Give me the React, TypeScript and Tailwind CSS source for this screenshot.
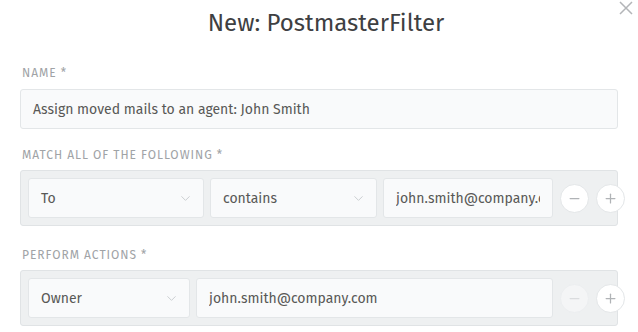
import { ChevronDown, Minus, Plus } from 'lucide-react'

function Select({ label, width }: { label: string; width: string }) {
  return (
    <div className={`${width} h-10 shrink-0 flex items-center justify-between pl-3 pr-[10px] bg-[#f9fafb] border border-[#e3e6e8] rounded-[3px]`}>
      <span className="text-[14px] text-[#585856]">{label}</span>
      <ChevronDown className="w-[15px] h-[15px] text-[#c8cbce]" strokeWidth={1.5} />
    </div>
  )
}

function Field({ value, width }: { value: string; width: string }) {
  return (
    <div className={`${width} h-10 shrink-0 flex items-center px-3 bg-[#f9fafb] border border-[#e3e6e8] rounded-[3px]`}>
      <div className="flex-1 overflow-hidden">
        <span className="text-[14px] text-[#585856] whitespace-nowrap">{value}</span>
      </div>
    </div>
  )
}

function RoundButton({ kind, disabled }: { kind: 'minus' | 'plus'; disabled?: boolean }) {
  const Icon = kind === 'minus' ? Minus : Plus
  return (
    <div
      className={`w-[29px] h-[29px] rounded-full flex items-center justify-center border ${
        disabled ? 'bg-[#f4f5f6] border-[#eceef0]' : 'bg-white border-[#e3e6e8]'
      }`}
    >
      <Icon className={`w-[15px] h-[15px] ${disabled ? 'text-[#dadcde]' : 'text-[#b0b3b6]'}`} strokeWidth={2} />
    </div>
  )
}

function Label({ children }: { children: string }) {
  return (
    <div className="text-[12px] tracking-[0.08em] uppercase text-[#a0a3a6] leading-none px-[2px]">{children}</div>
  )
}

export default function App() {
  return (
    <div className="w-[638px] h-[332px] bg-white overflow-hidden relative" style={{ fontFamily: '"Fira Sans", Roboto, "Noto Sans", sans-serif' }}>
      <svg className="absolute left-[619px] top-[1px]" width="14" height="14" viewBox="0 0 14 14">
        <path d="M1 1 L13 13 M13 1 L1 13" stroke="#b3b5b8" strokeWidth="1.5" fill="none" />
      </svg>
      <div className="pt-[7px] pl-[14px] text-center text-[24px] leading-[32px] text-[#3e4042]">New: PostmasterFilter</div>
      <div className="px-5 pt-[28px]">
        <Label>Name *</Label>
        <div className="mt-[10px] h-10 flex items-center px-3 bg-[#f9fafb] border border-[#e3e6e8] rounded-[3px]">
          <span className="text-[14px] text-[#585856]">Assign moved mails to an agent: John Smith</span>
        </div>

        <div className="mt-[20px]">
          <Label>Match all of the following *</Label>
        </div>
        <div className="mt-[9px] flex items-center gap-[6px] p-[7px] bg-[#eef0f1] border border-[#e0e3e5] rounded-[3px]">
          <Select label="To" width="w-[176px]" />
          <Select label="contains" width="w-[167px]" />
          <Field value="john.smith@company.com" width="w-[170px]" />
          <div className="flex items-center gap-[7px] ml-[1px]">
            <RoundButton kind="minus" />
            <RoundButton kind="plus" />
          </div>
        </div>

        <div className="mt-[23px]">
          <Label>Perform actions *</Label>
        </div>
        <div className="mt-[9px] flex items-center gap-[6px] p-[7px] bg-[#eef0f1] border border-[#e0e3e5] rounded-[3px]">
          <Select label="Owner" width="w-[162px]" />
          <Field value="john.smith@company.com" width="w-[357px]" />
          <div className="flex items-center gap-[7px] ml-[1px]">
            <RoundButton kind="minus" disabled />
            <RoundButton kind="plus" />
          </div>
        </div>
      </div>
    </div>
  )
}
